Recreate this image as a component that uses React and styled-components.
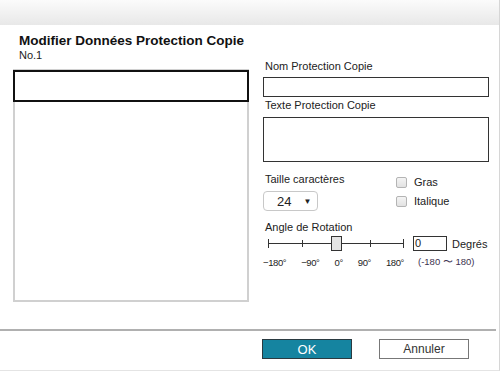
import React from "react";
import styled, { createGlobalStyle } from "styled-components";

const GlobalStyle = createGlobalStyle`
  html, body {
    margin: 0;
    padding: 0;
    background: #fff;
  }
  body {
    font-family: "Liberation Sans", Arial, sans-serif;
    color: #222;
  }
`;

const Page = styled.div`
  width: 500px;
  height: 371px;
  display: flex;
  flex-direction: column;
  box-sizing: border-box;
  border-right: 1px solid #d6d6d6;
  border-bottom: 1px solid #e4e4e4;
  overflow: hidden;
`;

const Header = styled.div`
  height: 25px;
  flex: none;
  background: linear-gradient(#fbfbfb, #e8e8e8);
`;

const Main = styled.div`
  height: 304px;
  flex: none;
  display: flex;
  gap: 14px;
  padding-left: 13px;
  box-sizing: border-box;
`;

const LeftColumn = styled.div`
  width: 236px;
  display: flex;
  flex-direction: column;
`;

const Title = styled.h1`
  margin: 8px 0 0 6px;
  font-size: 13.5px;
  line-height: 16px;
  font-weight: bold;
  color: #111;
  white-space: nowrap;
`;

const SubTitle = styled.div`
  margin-left: 6px;
  font-size: 11px;
  line-height: 13px;
`;

const ListBox = styled.div`
  margin-top: 7px;
  height: 233px;
  border: 2px solid #d0d0d0;
  box-sizing: border-box;
`;

const ListRow = styled.div`
  margin: -1px -2px 0;
  height: 32px;
  border: 2px solid ${(p) => (p.$selected ? "#111" : "transparent")};
  box-sizing: border-box;
`;

const RightColumn = styled.div`
  width: 226px;
  padding-top: 34px;
  display: flex;
  flex-direction: column;
`;

const Label = styled.div`
  font-size: 11px;
  line-height: 14px;
  margin-top: ${(p) => p.$top || 0}px;
  padding-left: ${(p) => p.$indent || 2}px;
  white-space: nowrap;
`;

const TextInput = styled.div`
  margin-top: ${(p) => p.$top || 4}px;
  height: ${(p) => p.$height}px;
  border: 1px solid #333;
  box-sizing: border-box;
`;

const OptionsRow = styled.div`
  display: flex;
  margin-top: 10px;
`;

const SizeGroup = styled.div`
  width: 133px;
  display: flex;
  flex-direction: column;
`;

const Select = styled.div`
  margin-top: 5px;
  width: 55px;
  height: 20px;
  border: 1px solid #c8c8c8;
  border-radius: 4px;
  box-sizing: border-box;
  display: flex;
  align-items: center;
  padding-left: 13px;
  gap: 12px;
  font-size: 13px;
`;

const Arrow = styled.span`
  font-size: 8px;
`;

const CheckGroup = styled.div`
  display: flex;
  flex-direction: column;
  gap: 8px;
  padding-top: 5px;
`;

const CheckRow = styled.label`
  display: flex;
  align-items: center;
  gap: 7px;
  font-size: 11px;
  line-height: 11px;
`;

const CheckBox = styled.span`
  width: 9px;
  height: 9px;
  border: 1px solid #b4b4b4;
  border-radius: 2px;
  background: linear-gradient(#f4f4f4, #e2e2e2);
`;

const SliderRow = styled.div`
  display: flex;
  align-items: center;
  margin-top: 2px;
  height: 15px;
`;

const SliderTrack = styled.svg`
  width: 150px;
  height: 15px;
  flex: none;
`;

const DegreeInput = styled.div`
  width: 34px;
  height: 15px;
  border: 1px solid #333;
  box-sizing: border-box;
  font-size: 11px;
  line-height: 13px;
  padding-left: 1px;
`;

const Unit = styled.span`
  margin-left: 5px;
  font-size: 11px;
`;

const TickRow = styled.div`
  display: flex;
  align-items: center;
  margin-top: 5px;
`;

const Ticks = styled.div`
  width: 141px;
  display: flex;
  justify-content: space-between;
  font-size: 9.5px;
  letter-spacing: -0.4px;
`;

const Range = styled.span`
  margin-left: 14px;
  font-size: 9.5px;
  color: #3d3350;
`;

const Separator = styled.div`
  height: 2px;
  width: 496px;
  flex: none;
  background: #b0b0b0;
`;

const Footer = styled.div`
  display: flex;
  padding: 8px 0 0 262px;
  gap: 27px;
`;

const Button = styled.button`
  width: 90px;
  height: 20px;
  padding: 0;
  font-family: inherit;
  font-size: ${(p) => (p.$primary ? 13 : 12)}px;
  border: 1px solid ${(p) => (p.$primary ? "#2a3a40" : "#777")};
  background: ${(p) => (p.$primary ? "#1584a0" : "#fff")};
  color: ${(p) => (p.$primary ? "#fff" : "#333")};
`;

export default function App() {
  return (
    <>
      <GlobalStyle />
      <Page>
        <Header />
        <Main>
          <LeftColumn>
            <Title>Modifier Données Protection Copie</Title>
            <SubTitle>No.1</SubTitle>
            <ListBox>
              <ListRow $selected />
            </ListBox>
          </LeftColumn>
          <RightColumn>
            <Label>Nom Protection Copie</Label>
            <TextInput $height={20} />
            <Label $top={1}>Texte Protection Copie</Label>
            <TextInput $height={45} $top={5} />
            <OptionsRow>
              <SizeGroup>
                <Label>Taille caractères</Label>
                <Select>
                  <span>24</span>
                  <Arrow>▼</Arrow>
                </Select>
              </SizeGroup>
              <CheckGroup>
                <CheckRow>
                  <CheckBox />
                  Gras
                </CheckRow>
                <CheckRow>
                  <CheckBox />
                  Italique
                </CheckRow>
              </CheckGroup>
            </OptionsRow>
            <Label $top={9}>Angle de Rotation</Label>
            <SliderRow>
              <SliderTrack viewBox="0 0 150 15">
                <g stroke="#333" strokeWidth="1">
                  <line x1="5.5" y1="7.5" x2="140.5" y2="7.5" />
                  <line x1="5.5" y1="3" x2="5.5" y2="12" />
                  <line x1="39.5" y1="4" x2="39.5" y2="11" />
                  <line x1="107.5" y1="4" x2="107.5" y2="11" />
                  <line x1="140.5" y1="3" x2="140.5" y2="12" />
                  <rect x="68.5" y="0.5" width="10" height="14" fill="#e4e4e4" />
                </g>
              </SliderTrack>
              <DegreeInput>0</DegreeInput>
              <Unit>Degrés</Unit>
            </SliderRow>
            <TickRow>
              <Ticks>
                <span>−180°</span>
                <span>−90°</span>
                <span>0°</span>
                <span>90°</span>
                <span>180°</span>
              </Ticks>
              <Range>(-180 〜 180)</Range>
            </TickRow>
          </RightColumn>
        </Main>
        <Separator />
        <Footer>
          <Button $primary>OK</Button>
          <Button>Annuler</Button>
        </Footer>
      </Page>
    </>
  );
}
